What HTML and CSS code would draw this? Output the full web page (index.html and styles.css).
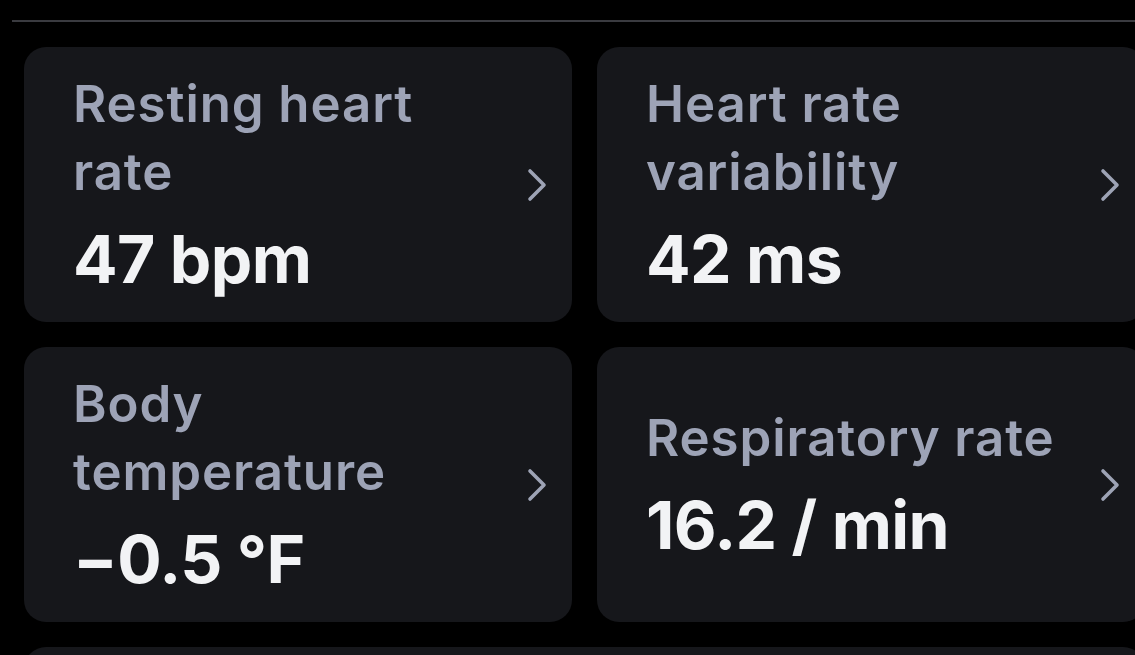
FILE: index.html
```html
<!DOCTYPE html>
<html lang="en">
<head>
<meta charset="utf-8">
<title>Vitals</title>
<link rel="stylesheet" href="styles.css">
</head>
<body>
<div class="page">
  <div class="divider"></div>
  <div class="grid">
    <div class="card">
      <div class="content">
        <div class="label">Resting heart rate</div>
        <div class="value">47 bpm</div>
      </div>
      <svg class="chev" viewBox="0 0 20 34" width="20" height="34"><path d="M3 3 L17 17 L3 31" fill="none" stroke="#9da3b5" stroke-width="3.6" stroke-linecap="round" stroke-linejoin="round"/></svg>
    </div>
    <div class="card">
      <div class="content">
        <div class="label">Heart rate variability</div>
        <div class="value">42 ms</div>
      </div>
      <svg class="chev" viewBox="0 0 20 34" width="20" height="34"><path d="M3 3 L17 17 L3 31" fill="none" stroke="#9da3b5" stroke-width="3.6" stroke-linecap="round" stroke-linejoin="round"/></svg>
    </div>
    <div class="card">
      <div class="content">
        <div class="label">Body temperature</div>
        <div class="value">−0.5 °F</div>
      </div>
      <svg class="chev" viewBox="0 0 20 34" width="20" height="34"><path d="M3 3 L17 17 L3 31" fill="none" stroke="#9da3b5" stroke-width="3.6" stroke-linecap="round" stroke-linejoin="round"/></svg>
    </div>
    <div class="card">
      <div class="content">
        <div class="label">Respiratory rate</div>
        <div class="value">16.2 / min</div>
      </div>
      <svg class="chev" viewBox="0 0 20 34" width="20" height="34"><path d="M3 3 L17 17 L3 31" fill="none" stroke="#9da3b5" stroke-width="3.6" stroke-linecap="round" stroke-linejoin="round"/></svg>
    </div>
    <div class="card card-next"></div>
  </div>
</div>
</body>
</html>
```

FILE: styles.css
```css
html, body {
  margin: 0;
  padding: 0;
  background: #000;
  overflow: hidden;
}
body {
  width: 1135px;
  height: 655px;
  font-family: Inter, "Noto Sans", sans-serif;
}
.page {
  width: 1170px;
  height: 655px;
  overflow: hidden;
  padding-top: 20px;
  box-sizing: border-box;
}
.divider {
  height: 2px;
  background: #3a3b40;
  margin-left: 12px;
}
.grid {
  display: grid;
  grid-template-columns: 548px 548px;
  column-gap: 25px;
  row-gap: 25px;
  padding: 25px 24px 0 24px;
}
.card {
  background: #16171b;
  border-radius: 22px;
  display: flex;
  align-items: center;
  padding: 22px 25px 22px 49px;
  min-height: 231px;
  gap: 17px;
}
.card-next {
  grid-column: 1 / -1;
  min-height: 100px;
}
.content {
  flex: 1;
  min-width: 0;
}
.label {
  color: #9da3b6;
  font-size: 51px;
  font-weight: 600;
  line-height: 68px;
  letter-spacing: 0.9px;
}
.value {
  color: #f2f3f5;
  font-size: 66px;
  font-weight: 700;
  line-height: 80px;
  margin-top: 13px;
  letter-spacing: -0.6px;
}
.chev {
  flex: none;
  display: block;
}
```
